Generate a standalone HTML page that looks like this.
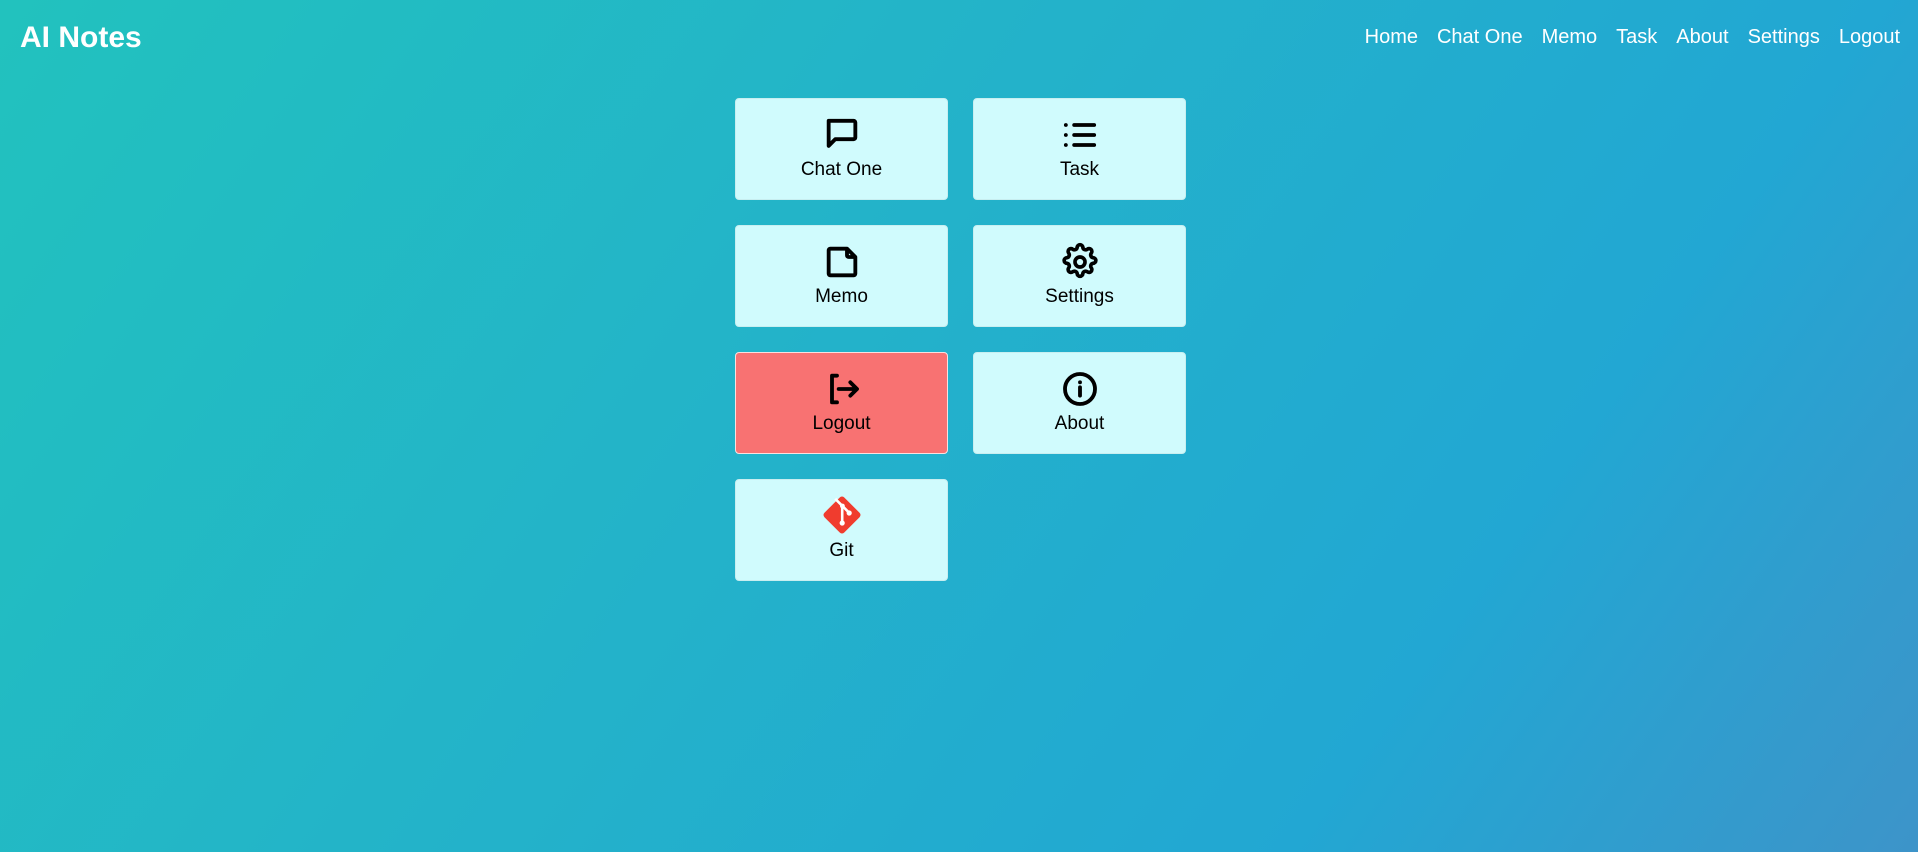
<!DOCTYPE html>
<html><head><meta charset="utf-8"><style>
html,body{margin:0;padding:0;width:1918px;height:852px;overflow:hidden}
body{background:linear-gradient(125deg,#22c2be 0%,#23b3c9 40%,#22a7d3 75%,#3d94c9 100%);font-family:"Liberation Sans",sans-serif;position:relative}
.title{position:absolute;left:20px;top:21px;font-size:30px;font-weight:bold;color:#fff}
.nav{position:absolute;right:18px;top:26px;font-size:20px;color:#fff;display:flex;gap:19px}
.card{position:absolute;width:213px;height:102px;background:#d0fbfd;border-radius:4px;box-sizing:border-box;border:1px solid #c8eef0;text-align:center}
.card svg{position:absolute;left:86px;top:16px;width:40px;height:40px}
.card span{position:absolute;left:0;right:0;top:60px;font-size:19px;color:#000}
.red{background:#f87272;border-color:#fbe0e0}
</style></head><body>
<div class="title">AI Notes</div>
<div class="nav"><span>Home</span><span>Chat One</span><span>Memo</span><span>Task</span><span>About</span><span>Settings</span><span>Logout</span></div>

<div class="card" style="left:735px;top:98px">
<svg viewBox="0 0 24 24" fill="none" stroke="#000" stroke-width="2.3" stroke-linejoin="round" stroke-linecap="round"><path d="M4 3.5h15a1 1 0 0 1 1 1v9a1 1 0 0 1-1 1H8l-4 4z"/></svg>
<span>Chat One</span></div>
<div class="card" style="left:973px;top:98px">
<svg viewBox="0 0 24 24" fill="none" stroke="#000" stroke-width="2.3" stroke-linecap="round"><path d="M8.5 6h12M8.5 12h12M8.5 18h12M3.5 6h.01M3.5 12h.01M3.5 18h.01"/></svg>
<span>Task</span></div>
<div class="card" style="left:735px;top:225px">
<svg viewBox="0 0 24 24" fill="none" stroke="#000" stroke-width="2.3" stroke-linejoin="round"><path d="M5 4h10l5 5v10a1 1 0 0 1-1 1H5a1 1 0 0 1-1-1V5a1 1 0 0 1 1-1z M15 4v4a1 1 0 0 0 1 1h4"/></svg>
<span>Memo</span></div>
<div class="card" style="left:973px;top:225px">
<svg viewBox="0 0 24 24" fill="none" stroke="#000" stroke-width="2.2" stroke-linejoin="round"><path d="M10.3 3.3a1.7 1.7 0 0 1 3.4 0 1.7 1.7 0 0 0 2.6 1.1 1.7 1.7 0 0 1 2.4 2.4 1.7 1.7 0 0 0 1.1 2.6 1.7 1.7 0 0 1 0 3.4 1.7 1.7 0 0 0-1.1 2.6 1.7 1.7 0 0 1-2.4 2.4 1.7 1.7 0 0 0-2.6 1.1 1.7 1.7 0 0 1-3.4 0 1.7 1.7 0 0 0-2.6-1.1 1.7 1.7 0 0 1-2.4-2.4 1.7 1.7 0 0 0-1.1-2.6 1.7 1.7 0 0 1 0-3.4 1.7 1.7 0 0 0 1.1-2.6 1.7 1.7 0 0 1 2.4-2.4 1.7 1.7 0 0 0 2.6-1.1z"/><circle cx="12" cy="12" r="3"/></svg>
<span>Settings</span></div>
<div class="card red" style="left:735px;top:352px">
<svg viewBox="0 0 24 24" fill="none" stroke="#000" stroke-width="2.3" stroke-linecap="round" stroke-linejoin="round"><path d="M9 4H6v16h3M10 12h11M17 8l4 4-4 4"/></svg>
<span>Logout</span></div>
<div class="card" style="left:973px;top:352px">
<svg viewBox="0 0 24 24" fill="none" stroke="#000" stroke-width="2.3" stroke-linecap="round"><circle cx="12" cy="12" r="9"/><path d="M12 11v5M12 8h.01"/></svg>
<span>About</span></div>
<div class="card" style="left:735px;top:479px">
<svg viewBox="0 0 24 24" style="left:82px;top:11px;width:48px;height:48px"><rect x="5" y="5" width="14" height="14" rx="1.6" transform="rotate(45 12 12)" fill="#f03c2e"/><g stroke="#fff" stroke-width="1.3" fill="none"><path d="M8.6 3.9l3.7 3.7M12.1 7.4v8.5M12.3 7.6l3.3 3.3"/></g><circle cx="12.1" cy="16" r="1.3" fill="#fff"/><circle cx="15.6" cy="11" r="1.3" fill="#fff"/><circle cx="12.2" cy="7.5" r="1.2" fill="#fff"/></svg>
<span>Git</span></div>
</body></html>
